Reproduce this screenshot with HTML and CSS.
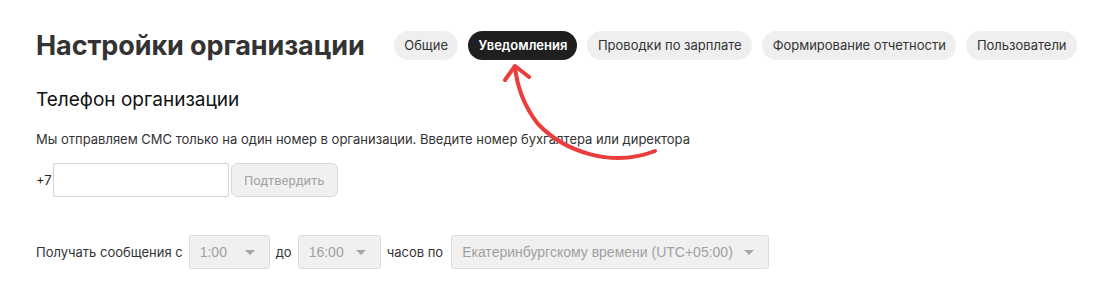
FILE: index.html
```html
<!DOCTYPE html>
<html lang="ru">
<head>
    <meta charset="UTF-8">
    <meta name="viewport" content="width=device-width, initial-scale=1.0">
    <title>Настройки организации</title>
    <link rel="stylesheet" href="styles.css">
</head>
<body>
    <div class="page">
        <div class="header">
            <h1>Настройки организации</h1>
            <nav class="tabs">
                <span class="tab">Общие</span>
                <span class="tab active">Уведомления</span>
                <span class="tab">Проводки по зарплате</span>
                <span class="tab">Формирование отчетности</span>
                <span class="tab">Пользователи</span>
            </nav>
        </div>

        <h2>Телефон организации</h2>
        <p class="hint">Мы отправляем СМС только на один номер в организации. Введите номер бухгалтера или директора</p>

        <div class="phone-row">
            <span class="prefix">+7</span>
            <input type="text" class="phone-input">
            <button class="confirm-btn" disabled>Подтвердить</button>
        </div>

        <div class="time-row">
            <span>Получать сообщения с</span>
            <div class="select select-time">1:00<i class="caret"></i></div>
            <span>до</span>
            <div class="select select-time wide">16:00<i class="caret"></i></div>
            <span>часов по</span>
            <div class="select select-zone">Екатеринбургскому времени (UTC+05:00)<i class="caret"></i></div>
        </div>
    </div>

    <!-- annotation arrow -->
    <svg class="arrow" width="1114" height="296" viewBox="0 0 1114 296">
        <path d="M655 151 C 612 168, 565 152, 538 124 C 524 106, 517 86, 515 67" fill="none" stroke="#ea3d3c" stroke-width="4" stroke-linecap="round"/>
        <path d="M505 80 L515 66 L529 77" fill="none" stroke="#ea3d3c" stroke-width="4" stroke-linecap="round" stroke-linejoin="round"/>
    </svg>
</body>
</html>
```

FILE: styles.css
```css
* {
    margin: 0;
    padding: 0;
    box-sizing: border-box;
}

body {
    font-family: Inter, Roboto, sans-serif;
    color: #222;
    background: #fff;
}

.page {
    padding: 29px 36px;
}

.header {
    display: flex;
    align-items: center;
    gap: 29px;
    white-space: nowrap;
}

h1 {
    font-size: 27px;
    font-weight: 700;
    color: #333;
    letter-spacing: -0.1px;
    flex-shrink: 0;
}

.tabs {
    display: flex;
    gap: 10px;
}

.tab {
    background: #efefef;
    border-radius: 15px;
    height: 29px;
    line-height: 29px;
    padding: 0 10.5px;
    font-size: 13px;
    color: #333;
}

.tab.active {
    background: #1f1f1f;
    color: #fff;
    font-weight: 600;
    padding: 0 10px;
}

h2 {
    margin-top: 26px;
    font-size: 19px;
    font-weight: 400;
    color: #111;
}

.hint {
    margin-top: 20px;
    font-size: 13px;
    color: #333;
}

.phone-row {
    display: flex;
    align-items: center;
    margin-top: 16px;
    font-size: 13px;
}

.prefix {
    margin-right: 1px;
}

.phone-input {
    width: 176px;
    height: 34px;
    border: 1px solid #d4d4d4;
    border-radius: 2px;
    font-size: 13px;
}

.confirm-btn {
    margin-left: 2px;
    height: 34px;
    width: 107px;
    background: #f0f0f0;
    border: 1px solid #d9d9d9;
    border-radius: 6px;
    color: #a3a3a3;
    font-family: Roboto, sans-serif;
    font-size: 13px;
}

.time-row {
    display: flex;
    align-items: center;
    gap: 6px;
    margin-top: 38px;
    font-size: 13px;
    color: #333;
}

.select {
    position: relative;
    height: 34px;
    line-height: 32px;
    background: #f0f0f0;
    border: 1px solid #dcdcdc;
    border-radius: 3px;
    color: #a0a0a0;
    font-family: "Liberation Sans", Arial, sans-serif;
    font-size: 14px;
    padding-left: 10px;
}

.select-time {
    width: 81px;
}

.select-time.wide {
    width: 83px;
}

.select-zone {
    width: 318px;
    margin-left: 2px;
}

.caret {
    position: absolute;
    right: 14px;
    top: 14px;
    border-left: 5px solid transparent;
    border-right: 5px solid transparent;
    border-top: 5px solid #a6a6a6;
}

.arrow {
    position: absolute;
    left: 0;
    top: 0;
    pointer-events: none;
}
```
